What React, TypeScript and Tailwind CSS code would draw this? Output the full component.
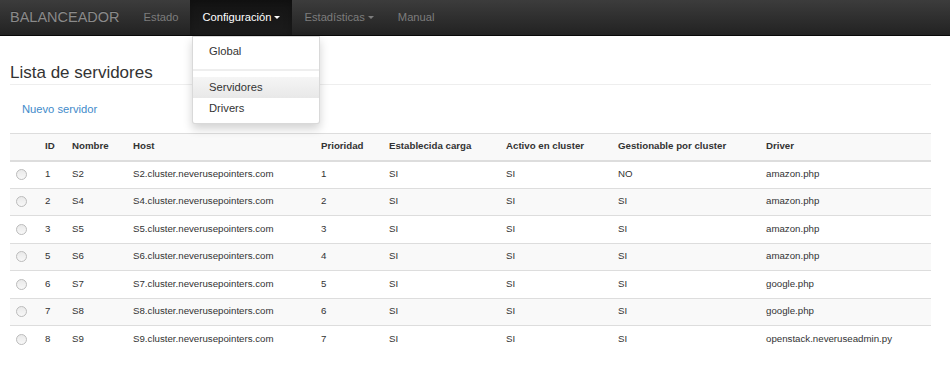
import React from "react";

type Server = {
  id: number;
  name: string;
  priority: number;
  carga: string;
  activo: string;
  gestionable: string;
  driver: string;
};

const SERVERS: Server[] = [
  { id: 1, name: "S2", priority: 1, carga: "SI", activo: "SI", gestionable: "NO", driver: "amazon.php" },
  { id: 2, name: "S4", priority: 2, carga: "SI", activo: "SI", gestionable: "SI", driver: "amazon.php" },
  { id: 3, name: "S5", priority: 3, carga: "SI", activo: "SI", gestionable: "SI", driver: "amazon.php" },
  { id: 5, name: "S6", priority: 4, carga: "SI", activo: "SI", gestionable: "SI", driver: "amazon.php" },
  { id: 6, name: "S7", priority: 5, carga: "SI", activo: "SI", gestionable: "SI", driver: "google.php" },
  { id: 7, name: "S8", priority: 6, carga: "SI", activo: "SI", gestionable: "SI", driver: "google.php" },
  { id: 8, name: "S9", priority: 7, carga: "SI", activo: "SI", gestionable: "SI", driver: "openstack.neveruseadmin.py" },
];

const HEADERS: { label: string; width: string }[] = [
  { label: "", width: "w-[29px]" },
  { label: "ID", width: "w-[27px]" },
  { label: "Nombre", width: "w-[61px]" },
  { label: "Host", width: "w-[188px]" },
  { label: "Prioridad", width: "w-[68px]" },
  { label: "Establecida carga", width: "w-[117px]" },
  { label: "Activo en cluster", width: "w-[112px]" },
  { label: "Gestionable por cluster", width: "w-[148px]" },
  { label: "Driver", width: "" },
];

const CELL = "px-[6px] align-middle border-t border-[#ddd]";

function Caret() {
  return (
    <span className="ml-[3px] inline-block w-0 h-0 align-middle border-x-[3.5px] border-x-transparent border-t-[3.5px] border-t-current" />
  );
}

function Radio() {
  return (
    <span className="block w-[11px] h-[11px] rounded-full border border-[#bcbcbc] bg-[linear-gradient(to_bottom,#e9e9e9,#f8f8f8)]" />
  );
}

export default function App() {
  return (
    <div className="relative min-h-screen bg-white font-['Liberation_Sans',Arial,sans-serif] text-[#333]">
      <nav className="h-[36px] flex items-stretch bg-[linear-gradient(to_bottom,#3c3c3c,#222)] border-b border-[#080808]">
        <div className="pl-[10px] pr-[12px] flex items-center text-[14.5px] text-[#8a8a8a] [text-shadow:0_-1px_0_rgba(0,0,0,.25)]">
          BALANCEADOR
        </div>
        <div className="px-[12px] flex items-center text-[11.2px] text-[#7d7d7d]">Estado</div>
        <div className="px-[12px] flex items-center text-[11.2px] text-white bg-[linear-gradient(to_bottom,#141414,#1c1c1c)] shadow-[inset_0_3px_9px_rgba(0,0,0,.25)]">
          Configuración
          <Caret />
        </div>
        <div className="px-[12px] flex items-center text-[11.2px] text-[#7d7d7d]">
          Estadísticas
          <Caret />
        </div>
        <div className="px-[12px] flex items-center text-[11.2px] text-[#7d7d7d]">Manual</div>
      </nav>

      <div className="absolute left-[192px] top-[36px] w-[128px] py-[4px] bg-white border border-[rgba(0,0,0,.15)] rounded-b-[3px] shadow-[0_5px_10px_rgba(0,0,0,.175)] text-[11.2px] text-[#333] z-10">
        <div className="h-[21px] pl-[16px] flex items-center">Global</div>
        <div className="mt-[7px] mb-[6px] h-[2px] bg-[#eee]" />
        <div className="h-[21px] pl-[16px] flex items-center bg-[linear-gradient(to_bottom,#f5f5f5,#e8e8e8)]">
          Servidores
        </div>
        <div className="h-[21px] pl-[16px] flex items-center">Drivers</div>
      </div>

      <main className="pl-[10px] w-[931px]">
        <h3 className="mt-[27px] pb-[2px] text-[17px] leading-[19px] text-[#333] border-b border-[#eee]">
          Lista de servidores
        </h3>

        <div className="mt-[16px] pl-[12px] text-[11.2px] leading-[16px] text-[#428bca]">Nuevo servidor</div>

        <table className="mt-[16px] w-full table-fixed border-collapse text-[9.7px]">
          <thead>
            <tr className="h-[27px] bg-[#f9f9f9]">
              {HEADERS.map((h, i) => (
                <th
                  key={i}
                  className={`${h.width} px-[6px] text-left font-bold align-middle border-t border-b-2 border-[#ddd]`}
                >
                  {h.label}
                </th>
              ))}
            </tr>
          </thead>
          <tbody>
            {SERVERS.map((s, idx) => (
              <tr key={s.id} className={`h-[27.5px] ${idx % 2 === 1 ? "bg-[#f9f9f9]" : "bg-white"}`}>
                <td className={CELL}>
                  <Radio />
                </td>
                <td className={CELL}>{s.id}</td>
                <td className={CELL}>{s.name}</td>
                <td className={CELL}>{s.name}.cluster.neverusepointers.com</td>
                <td className={CELL}>{s.priority}</td>
                <td className={CELL}>{s.carga}</td>
                <td className={CELL}>{s.activo}</td>
                <td className={CELL}>{s.gestionable}</td>
                <td className={CELL}>{s.driver}</td>
              </tr>
            ))}
          </tbody>
        </table>
      </main>
    </div>
  );
}
